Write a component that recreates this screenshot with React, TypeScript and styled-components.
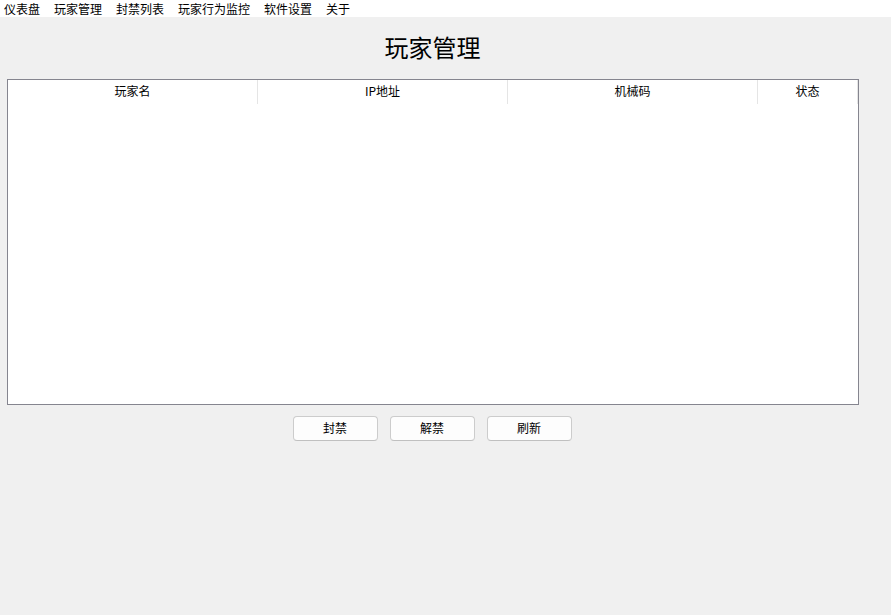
import React from "react";
import styled, { createGlobalStyle } from "styled-components";

const menus = ["仪表盘", "玩家管理", "封禁列表", "玩家行为监控", "软件设置", "关于"];
const columns = [
	{ title: "玩家名", width: 250 },
	{ title: "IP地址", width: 250 },
	{ title: "机械码", width: 250 },
	{ title: "状态", width: 100 },
];
const actions = ["封禁", "解禁", "刷新"];

export default function App() {
	return (
		<>
			<GlobalStyle />
			<MenuBar>
				{menus.map((m) => (
					<MenuItem key={m}>{m}</MenuItem>
				))}
			</MenuBar>
			<Content>
				<Title>玩家管理</Title>
				<Table>
					<HeaderRow>
						{columns.map((c) => (
							<HeaderCell key={c.title} $width={c.width}>
								{c.title}
							</HeaderCell>
						))}
					</HeaderRow>
				</Table>
				<Actions>
					{actions.map((a) => (
						<ActionButton key={a}>{a}</ActionButton>
					))}
				</Actions>
			</Content>
		</>
	);
}

const GlobalStyle = createGlobalStyle`
	html, body {
		margin: 0;
		height: 100%;
		background: #f0f0f0;
		font-family: "Noto Sans CJK SC", "Liberation Sans", sans-serif;
		font-size: 12px;
		color: #000;
	}
`;

const MenuBar = styled.div`
	display: flex;
	height: 17px;
	padding-left: 4px;
	gap: 14px;
	background: #fff;
	line-height: 17px;
`;

const MenuItem = styled.div`
	white-space: nowrap;
`;

const Content = styled.div`
	display: flex;
	flex-direction: column;
	align-items: center;
	width: 852px;
	margin-left: 7px;
`;

const Title = styled.h1`
	margin: 0 1px 0 0;
	height: 62px;
	font-size: 24px;
	font-weight: 400;
	line-height: 60px;
`;

const Table = styled.div`
	box-sizing: border-box;
	width: 852px;
	height: 326px;
	background: #fff;
	border: 1px solid #85858f;
`;

const HeaderRow = styled.div`
	display: flex;
	height: 24px;
`;

const HeaderCell = styled.div<{ $width: number }>`
	box-sizing: border-box;
	width: ${(props) => props.$width}px;
	border-right: 1px solid #e5e5e5;
	text-align: center;
	line-height: 22px;
`;

const Actions = styled.div`
	display: flex;
	gap: 12px;
	margin: 11px 2px 0 0;
`;

const ActionButton = styled.button`
	box-sizing: border-box;
	width: 85px;
	height: 25px;
	padding: 0 0 3px;
	background: #fdfdfd;
	border: 1px solid #cccccc;
	border-bottom-color: #c0c0c0;
	border-radius: 4px;
	font: inherit;
	color: #000;
`;
